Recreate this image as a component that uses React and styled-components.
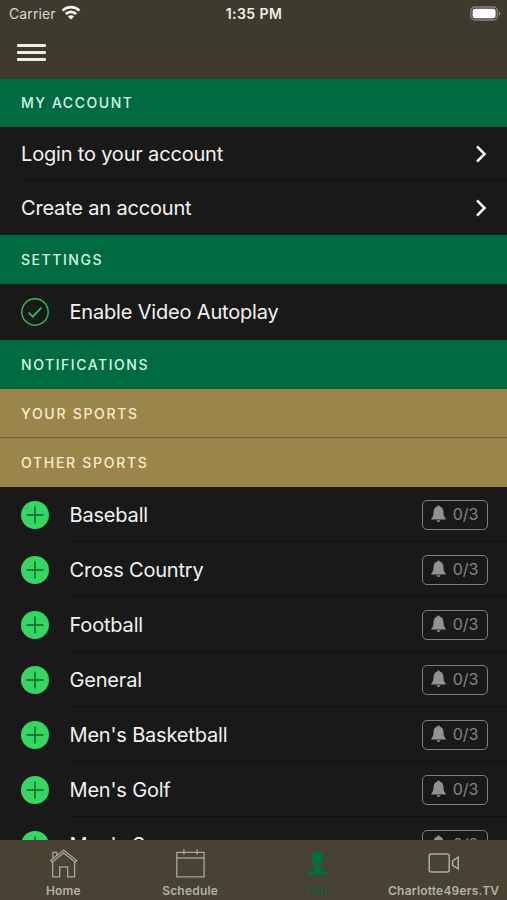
import React, { useState } from 'react';
import styled, { createGlobalStyle } from 'styled-components';

const GlobalStyle = createGlobalStyle`
	* {
		box-sizing: border-box;
	}

	body {
		margin: 0;
		background: #191919;
		font-family: Inter, "Liberation Sans", sans-serif;
		-webkit-font-smoothing: antialiased;
	}

	button {
		margin: 0;
		padding: 0;
		border: none;
		background: none;
		font: inherit;
		color: inherit;
		cursor: pointer;
	}
`

const Screen = styled.div`
	width: 100%;
	height: 100vh;
	display: flex;
	flex-direction: column;
	overflow: hidden;
	background: #191919;
	color: #f2f2f2;
`

const Header = styled.header`
	flex: none;
	height: 79px;
	background: #3f3a2e;
	color: #f1eee4;
`

const StatusBar = styled.div`
	height: 27px;
	padding: 0 6px 0 9px;
	display: grid;
	grid-template-columns: 1fr auto 1fr;
	align-items: center;
`

const Carrier = styled.div`
	display: flex;
	align-items: center;
	gap: 5px;
	color: #dcd8cd;
	font-size: 14px;
	letter-spacing: 0.1px;

	svg {
		margin-top: -2px;
	}
`

const Clock = styled.div`
	margin-left: -2px;
	font-size: 14px;
	font-weight: 600;
	letter-spacing: 0.45px;
`

const Battery = styled.div`
	display: flex;
	justify-content: flex-end;
`

const MenuButton = styled.button`
	display: flex;
	flex-direction: column;
	gap: 4px;
	margin: 17px 0 0 17px;

	span {
		width: 29px;
		height: 3px;
		border-radius: 1px;
		background: #f1efe0;
	}
`

const Content = styled.main`
	flex: 1;
	min-height: 0;
	overflow: hidden;
`

const SectionTitle = styled.h2`
	margin: 0;
	height: ${({ $height }) => $height || 49}px;
	padding: 0 21px;
	display: flex;
	align-items: center;
	background: ${({ $gold }) => ($gold ? '#9a864a' : '#006b42')};
	border-bottom: ${({ $line }) => ($line ? '1px solid #6f6035' : 'none')};
	color: ${({ $gold }) => ($gold ? '#f9eccb' : '#d2f5e2')};
	font-size: 14px;
	font-weight: 500;
	line-height: 17px;
	letter-spacing: ${({ $gold }) => ($gold ? 1.7 : 1.55)}px;
`

const Row = styled.div`
	height: ${({ $height }) => $height || 55}px;
	padding: 0 20px 0 21px;
	display: flex;
	align-items: center;
`

const RowBody = styled.div`
	flex: 1;
	height: 100%;
	margin-right: -20px;
	padding-right: ${({ $right }) => $right || 20}px;
	display: flex;
	align-items: center;
	justify-content: space-between;
	box-shadow: ${({ $last }) => ($last ? 'none' : 'inset 0 -1px #111')};
`

const Label = styled.span`
	padding-top: 1px;
	font-size: 20px;
	line-height: 25px;
	letter-spacing: -0.18px;
	white-space: nowrap;
`

const RowIcon = styled.button`
	display: flex;
	margin-right: 20.5px;
`

const AlertBadge = styled.button`
	width: 66px;
	height: 30px;
	padding: 0 1px 1px 0;
	display: flex;
	align-items: center;
	justify-content: center;
	gap: 7px;
	border: 1.5px solid #7d7d7d;
	border-radius: 5px;
	color: #858585;
	font-size: 16px;
	letter-spacing: -0.1px;
`

const TabBar = styled.nav`
	flex: none;
	height: 60px;
	display: grid;
	grid-template-columns: repeat(4, 1fr);
	background: #474232;
`

const Tab = styled.button`
	height: 60px;
	display: flex;
	flex-direction: column;
	align-items: center;
	color: ${({ $active }) => ($active ? '#15603a' : '#b5b1a4')};
	font-size: 12px;
	font-weight: 600;
	letter-spacing: 0.2px;
	white-space: nowrap;

	svg {
		display: block;
		margin-top: 8px;
	}

	span {
		margin-top: 4px;
		line-height: 15px;
	}
`

const WifiIcon = () => (
	<svg width="20" height="15" viewBox="0 0 20 15" fill="none" stroke="#f7f5ee" strokeWidth="2.7">
		<path d="M1.6 5.6a12 12 0 0 1 16.8 0" />
		<path d="M4.8 9a7.4 7.4 0 0 1 10.4 0" />
		<path d="M10 14.6L6.9 11.5a4.4 4.4 0 0 1 6.2 0z" fill="#f7f5ee" stroke="none" />
	</svg>
)

const BatteryIcon = () => (
	<svg width="31" height="16" viewBox="0 0 31 16">
		<rect x="0.9" y="1" width="26.4" height="13" rx="4" fill="none" stroke="#8b877e" strokeWidth="1.3" />
		<rect x="2.6" y="2.7" width="23" height="9.6" rx="2.4" fill="#fff" />
		<path d="M28.8 5.2q1.6.7 1.6 2.3t-1.6 2.3z" fill="#8b877e" />
	</svg>
)

const ChevronIcon = () => (
	<svg width="12" height="18" viewBox="0 0 12 18" fill="none" stroke="#f7f7f7" strokeWidth="2.5">
		<path d="M2 1.4L9.6 9 2 16.6" />
	</svg>
)

const CheckIcon = () => (
	<svg width="28" height="28" viewBox="0 0 28 28" fill="none" stroke="#2fc257">
		<circle cx="14" cy="14" r="13.2" strokeWidth="1.4" />
		<path d="M7.5 14.5l4.2 4.2 8.8-9" strokeWidth="1.7" />
	</svg>
)

const PlusIcon = () => (
	<svg width="28" height="28" viewBox="0 0 28 28">
		<circle cx="14" cy="14" r="14" fill="#32d862" />
		<path d="M14 5.5v17M5.5 14h17" stroke="#155c2b" strokeWidth="1.4" />
	</svg>
)

const BellIcon = () => (
	<svg width="15" height="18" viewBox="0 0 15 18" fill="#929292">
		<path d="M7.5.4c.8 0 1.2.5 1.2 1.2 2.3.6 3.6 2.5 3.7 5 .1 3.5.6 5.6 2.3 7 .3.4.1.9-.4.9H.7c-.5 0-.7-.5-.4-.9 1.7-1.4 2.2-3.5 2.3-7 .1-2.5 1.4-4.4 3.7-5C6.3.9 6.7.4 7.5.4z" />
		<path d="M5.6 15.2h3.8a1.9 1.7 0 0 1-3.8 0z" />
	</svg>
)

const HomeIcon = () => (
	<svg width="30" height="31" viewBox="0 0 30 31" fill="none" stroke="#aaa698" strokeWidth="1.3">
		<path d="M2.7 12.6L15.7 2l13 10.6-1.4 1.6L15.7 4.9 4.1 14.2z" />
		<path d="M4.9 10.3V4.4h3.8v2.8" />
		<path d="M4.7 14v14.8h7v-9.9h7.9v9.9h7V14" />
	</svg>
)

const CalendarIcon = () => (
	<svg width="30" height="31" viewBox="0 0 30 31" fill="none" stroke="#aaa698" strokeWidth="1.3">
		<path d="M1.8 4.3h27.3v24.5H1.8z" />
		<path d="M1.8 10h27.3" />
		<path d="M8.9 1.3v5.5M22.1 1.3v5.5" />
	</svg>
)

const PersonIcon = () => (
	<svg width="30" height="31" viewBox="0 0 30 31" fill="#00703f">
		<path d="M15.4 3.4c3.7 0 5.4 2.4 5.4 6.2 0 3.2-.8 5.4-2 7.3-.6 1.6-.6 4.4.2 5.2 1.4 1.2 7.4.8 7.4 4.6H4.4c0-3.8 6-3.4 7.4-4.6.8-.8.8-3.6.2-5.2-1.2-1.9-2-4.1-2-7.3 0-3.8 1.7-6.2 5.4-6.2z" />
	</svg>
)

const VideoIcon = () => (
	<svg width="32" height="31" viewBox="0 0 32 31" fill="none" stroke="#b0ac9e" strokeWidth="1.5">
		<rect x="1.2" y="6" width="20" height="18" rx="2" />
		<path d="M24.6 12.8l5.6-3.6v11.8l-5.6-3.6z" />
	</svg>
)

const sports = [
	'Baseball',
	'Cross Country',
	'Football',
	'General',
	"Men's Basketball",
	"Men's Golf",
	"Men's Soccer",
]

const tabs = [
	{ name: 'Home', icon: <HomeIcon /> },
	{ name: 'Schedule', icon: <CalendarIcon /> },
	{ name: 'You', icon: <PersonIcon /> },
	{ name: 'Charlotte49ers.TV', icon: <VideoIcon /> },
]

const App = () => {
	const [activeTab, setActiveTab] = useState('You')

	return (
		<Screen>
			<GlobalStyle />
			<Header>
				<StatusBar>
					<Carrier>Carrier <WifiIcon /></Carrier>
					<Clock>1:35 PM</Clock>
					<Battery><BatteryIcon /></Battery>
				</StatusBar>
				<MenuButton aria-label="Menu">
					<span />
					<span />
					<span />
				</MenuButton>
			</Header>
			<Content>
				<SectionTitle $height={47.5}>MY ACCOUNT</SectionTitle>
				<Row $height={54.5}>
					<RowBody>
						<Label>Login to your account</Label>
						<ChevronIcon />
					</RowBody>
				</Row>
				<Row $height={54}>
					<RowBody $last>
						<Label>Create an account</Label>
						<ChevronIcon />
					</RowBody>
				</Row>
				<SectionTitle $height={49}>SETTINGS</SectionTitle>
				<Row $height={56}>
					<RowIcon aria-label="Toggle autoplay"><CheckIcon /></RowIcon>
					<RowBody $last>
						<Label>Enable Video Autoplay</Label>
					</RowBody>
				</Row>
				<SectionTitle>NOTIFICATIONS</SectionTitle>
				<SectionTitle $gold $line>YOUR SPORTS</SectionTitle>
				<SectionTitle $gold>OTHER SPORTS</SectionTitle>
				{sports.map((name) => (
					<Row key={name}>
						<RowIcon aria-label={`Add ${name}`}><PlusIcon /></RowIcon>
						<RowBody $right={19}>
							<Label>{name}</Label>
							<AlertBadge><BellIcon /> 0/3</AlertBadge>
						</RowBody>
					</Row>
				))}
			</Content>
			<TabBar>
				{tabs.map(({ name, icon }) => (
					<Tab key={name} $active={name === activeTab} onClick={() => setActiveTab(name)}>
						{icon}
						<span>{name}</span>
					</Tab>
				))}
			</TabBar>
		</Screen>
	)
}

export default App;
